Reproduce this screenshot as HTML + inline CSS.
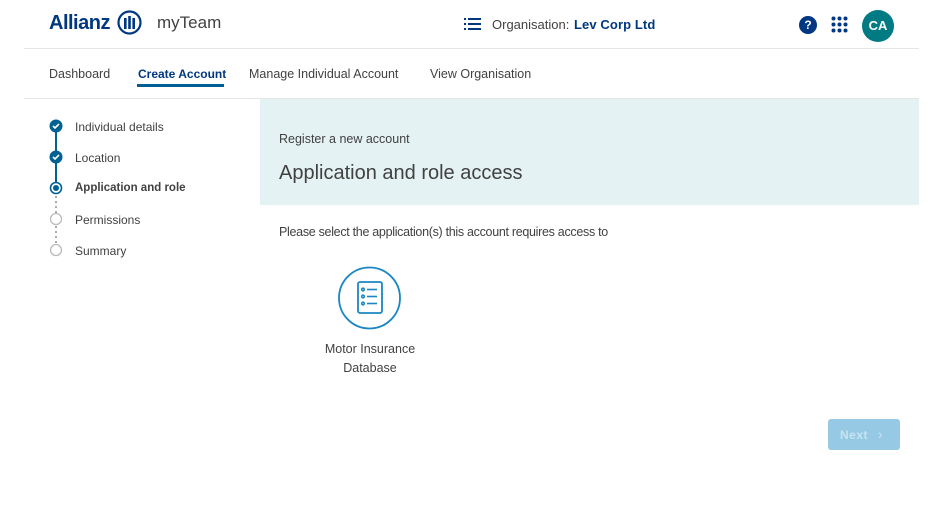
<!DOCTYPE html>
<html><head><style>
*{margin:0;padding:0;box-sizing:border-box}
body{width:928px;height:516px;background:#fff;font-family:"Liberation Sans",sans-serif;color:#414141;position:relative;overflow:hidden}
.a{position:absolute}
</style></head><body>
<div class="a" style="left:49px;top:12px;font-size:20px;font-weight:bold;color:#003781;letter-spacing:-0.5px">Allianz</div>
<svg class="a" style="left:117px;top:10px" width="25" height="25" viewBox="0 0 25 25"><circle cx="12.5" cy="12.5" r="11" fill="none" stroke="#003781" stroke-width="2.2"/><rect x="7" y="8" width="2.6" height="11" fill="#003781"/><rect x="11.2" y="6" width="2.6" height="13" fill="#003781"/><rect x="15.4" y="8" width="2.6" height="11" fill="#003781"/></svg>
<div class="a" style="left:157px;top:13px;font-size:17px;color:#414141">myTeam</div>
<svg class="a" style="left:464px;top:17px" width="17" height="14" viewBox="0 0 17 14"><g fill="#003781"><rect x="0" y="1" width="2" height="2"/><rect x="0" y="6" width="2" height="2"/><rect x="0" y="11" width="2" height="2"/><rect x="4" y="1" width="13" height="2"/><rect x="4" y="6" width="13" height="2"/><rect x="4" y="11" width="13" height="2"/></g></svg>
<div class="a" style="left:492px;top:17px;font-size:13px;color:#414141">Organisation:</div>
<div class="a" style="left:574px;top:17px;font-size:13px;font-weight:bold;color:#003781;letter-spacing:0.1px">Lev Corp Ltd</div>
<div class="a" style="left:799px;top:16px;width:18px;height:18px;border-radius:50%;background:#003781;color:#fff;font-size:12px;font-weight:bold;text-align:center;line-height:18px">?</div>
<svg class="a" style="left:831px;top:16px" width="17" height="17"><g fill="#003781"><circle cx="2.5" cy="2.5" r="2"/><circle cx="8.5" cy="2.5" r="2"/><circle cx="14.5" cy="2.5" r="2"/><circle cx="2.5" cy="8.5" r="2"/><circle cx="8.5" cy="8.5" r="2"/><circle cx="14.5" cy="8.5" r="2"/><circle cx="2.5" cy="14.5" r="2"/><circle cx="8.5" cy="14.5" r="2"/><circle cx="14.5" cy="14.5" r="2"/></g></svg>
<div class="a" style="left:862px;top:10px;width:32px;height:32px;border-radius:50%;background:#007b83;color:#fff;font-size:13px;font-weight:bold;text-align:center;line-height:32px">CA</div>
<div class="a" style="left:24px;top:48px;width:895px;height:1px;background:#e5e5e5"></div>
<div class="a" style="left:49px;top:67px;font-size:12.5px">Dashboard</div>
<div class="a" style="left:138px;top:67px;font-size:12px;font-weight:bold;color:#003781">Create Account</div>
<div class="a" style="left:137px;top:84px;width:87px;height:3px;background:#005e94"></div>
<div class="a" style="left:249px;top:67px;font-size:12.5px">Manage Individual Account</div>
<div class="a" style="left:430px;top:67px;font-size:12.5px">View Organisation</div>
<div class="a" style="left:24px;top:98px;width:895px;height:1px;background:#e5e5e5"></div>
<svg class="a" style="left:48px;top:118px" width="16" height="142">
<line x1="8" y1="8" x2="8" y2="70" stroke="#006192" stroke-width="2"/>
<line x1="8" y1="78" x2="8" y2="128" stroke="#aaa" stroke-width="2" stroke-dasharray="2,3"/>
<circle cx="8" cy="8" r="6.5" fill="#006192"/><path d="M5 8l2 2 4-4" stroke="#fff" stroke-width="1.6" fill="none"/>
<circle cx="8" cy="39" r="6.5" fill="#006192"/><path d="M5 39l2 2 4-4" stroke="#fff" stroke-width="1.6" fill="none"/>
<circle cx="8" cy="70" r="5.5" fill="#fff" stroke="#006192" stroke-width="1.6"/><circle cx="8" cy="70" r="3" fill="#006192"/>
<circle cx="8" cy="101" r="5.5" fill="#fff" stroke="#bbb" stroke-width="1.3"/>
<circle cx="8" cy="132" r="5.5" fill="#fff" stroke="#bbb" stroke-width="1.3"/>
</svg>
<div class="a" style="left:75px;top:120px;font-size:12px">Individual details</div>
<div class="a" style="left:75px;top:151px;font-size:12px">Location</div>
<div class="a" style="left:75px;top:182px;font-size:11.5px;font-weight:bold">Application and role</div>
<div class="a" style="left:75px;top:213px;font-size:12px">Permissions</div>
<div class="a" style="left:75px;top:244px;font-size:12px">Summary</div>
<div class="a" style="left:260px;top:99px;width:659px;height:106px;background:#e5f2f3"></div>
<div class="a" style="left:279px;top:132px;font-size:12.5px">Register a new account</div>
<div class="a" style="left:279px;top:162px;font-size:20px">Application and role access</div>
<div class="a" style="left:279px;top:225px;font-size:12.5px;letter-spacing:-0.3px">Please select the application(s) this account requires access to</div>
<svg class="a" style="left:336px;top:266px" width="67" height="64"><circle cx="33.5" cy="32" r="30.5" fill="none" stroke="#1a86c2" stroke-width="1.8"/><rect x="22" y="16" width="24" height="31" rx="2" fill="none" stroke="#1a86c2" stroke-width="1.8"/><g fill="none" stroke="#1a86c2" stroke-width="1.6"><circle cx="27" cy="23.5" r="1.3"/><circle cx="27" cy="30.5" r="1.3"/><circle cx="27" cy="37.5" r="1.3"/><line x1="31" y1="23.5" x2="41" y2="23.5"/><line x1="31" y1="30.5" x2="41" y2="30.5"/><line x1="31" y1="37.5" x2="41" y2="37.5"/></g></svg>
<div class="a" style="left:310px;top:340px;width:120px;text-align:center;font-size:12.5px;line-height:19px">Motor Insurance<br>Database</div>
<div class="a" style="left:828px;top:419px;width:72px;height:31px;background:#96cae4;border-radius:3px;color:#c8e3f1;font-size:12px;font-weight:bold;line-height:31px;padding-left:12px;letter-spacing:0.5px">Next <span style="margin-left:6px;font-weight:normal;font-size:14px">›</span></div>
</body></html>
